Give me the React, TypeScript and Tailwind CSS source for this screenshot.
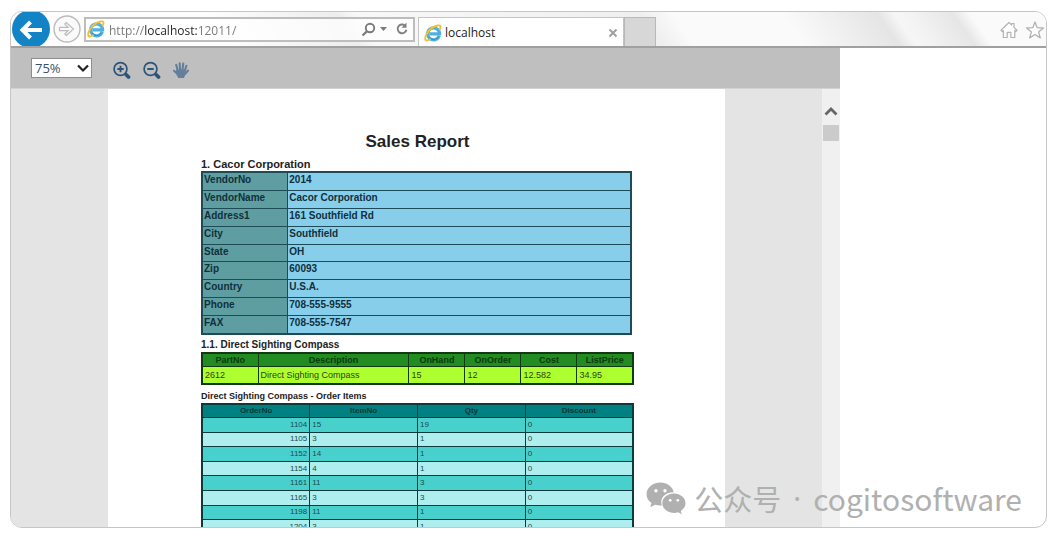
import React from "react";

const vendor = [
  ["VendorNo", "2014"],
  ["VendorName", "Cacor Corporation"],
  ["Address1", "161 Southfield Rd"],
  ["City", "Southfield"],
  ["State", "OH"],
  ["Zip", "60093"],
  ["Country", "U.S.A."],
  ["Phone", "708-555-9555"],
  ["FAX", "708-555-7547"],
];

const partColumns = ["PartNo", "Description", "OnHand", "OnOrder", "Cost", "ListPrice"];
const part = ["2612", "Direct Sighting Compass", "15", "12", "12.582", "34.95"];

const orderColumns = ["OrderNo", "ItemNo", "Qty", "Discount"];
const orders = [
  ["1104", "15", "19", "0"],
  ["1105", "3", "1", "0"],
  ["1152", "14", "1", "0"],
  ["1154", "4", "1", "0"],
  ["1161", "11", "3", "0"],
  ["1165", "3", "3", "0"],
  ["1198", "11", "1", "0"],
  ["1204", "3", "1", "0"],
];

function BrowserLogo() {
  return (
    <svg className="size-[18px] shrink-0" viewBox="0 0 18 18" fill="none" aria-hidden="true">
      <path d="M15.300 11.800A6 6 0 1 1 15.600 9.800H5.500" stroke="#4fb0e4" strokeWidth="3.200" />
      <path d="M14.300 13A5.600 5.600 0 0 1 5 13.200" stroke="#2f93d2" strokeWidth="1.200" />
      <path
        d="M15.800 5.400C17.300 2.400 16.400.800 13.600 1.500 9.800 2.400 5 5.800 2.600 10c-2 3.600-2 6.500.3 6.500 1 0 2-.500 3-1.200"
        stroke="#f3c033"
        strokeWidth="1.900"
        strokeLinecap="round"
      />
    </svg>
  );
}

function Magnifier({ plus }: { plus?: boolean }) {
  return (
    <svg className="size-[19px]" viewBox="0 0 19 19" fill="none" stroke="#2c5378" aria-hidden="true">
      <circle cx="8.500" cy="8" r="6.400" strokeWidth="1.700" />
      <path d={plus ? "M5.300 8h6.400M8.500 4.800v6.400" : "M5.300 8h6.400"} strokeWidth="1.900" />
      <path d="M14.500 14l2 2" strokeWidth="3.800" strokeLinecap="round" />
    </svg>
  );
}

function AddressBar() {
  return (
    <form className="ml-[3px] flex h-[25px] w-[331px] shrink-0 items-center border-2 border-[#bdbdbd] bg-white/70 pl-px pr-1">
      <BrowserLogo />
      <input
        type="text"
        aria-label="Address"
        defaultValue="http://localhost:12011/"
        className="ml-1 mt-1 min-w-0 flex-1 bg-[linear-gradient(90deg,#777_35px,#222_35px,#222_88px,#777_88px)] bg-clip-text text-xs text-transparent outline-none"
      />
      <button type="button" aria-label="Search" className="mr-1">
        <svg className="size-[15px]" viewBox="0 0 15 15" fill="none" stroke="#7a7a7a" strokeWidth="1.900" aria-hidden="true">
          <circle cx="9" cy="6" r="4.200" />
          <path d="M6 9.200L1.500 13.500" strokeWidth="2.200" />
        </svg>
      </button>
      <button type="button" aria-label="Show address list" className="mr-2">
        <svg className="h-1 w-[7px]" viewBox="0 0 7 4" fill="#7a7a7a" aria-hidden="true">
          <path d="M0 0h7L3.500 4z" />
        </svg>
      </button>
      <button type="button" aria-label="Refresh">
        <svg className="size-[14px]" viewBox="0 0 14 14" fill="none" stroke="#808080" strokeWidth="1.900" aria-hidden="true">
          <path d="M10 3.600A4.400 4.400 0 1 0 11.400 7.800" />
          <path d="M11.500.5v5.200H6.600z" fill="#808080" stroke="none" />
        </svg>
      </button>
    </form>
  );
}

function BrowserChrome() {
  return (
    <header className="flex h-9 shrink-0 items-center overflow-hidden border-b-2 border-[#a0a0a0] bg-[linear-gradient(55deg,#fdfdfd_0px,#fdfdfd_180px,#ededed_285px,#f8f8f8_300px,#efefef_535px,#fafafa_560px,#fafafa_650px,#e5e5e5_728px,#f6f6f6_742px,#f3f3f3_755px,#e6e6e6_790px,#fafafa_804px)]">
      <button type="button" aria-label="Back" className="ml-px shrink-0">
        <svg className="h-[34px] w-[38px]" viewBox="0 0 38 34" aria-hidden="true">
          <circle cx="19" cy="17" r="19" fill="#1283c4" />
          <path d="M30 18H11.500M18.500 10l-8 8 8 8" fill="none" stroke="#fff" strokeWidth="4" />
        </svg>
      </button>
      <button type="button" aria-label="Forward" className="ml-[3px] shrink-0">
        <svg className="size-7" viewBox="0 0 28 28" fill="none" stroke="#bcbcbc" aria-hidden="true">
          <circle cx="14" cy="14" r="13" strokeWidth="1.400" fill="#fafafa" />
          <path d="M6.500 12.300h8.500l-3.200-3.300 1.500-1.500L20.500 14l-7.200 6.500-1.500-1.500 3.200-3.300H6.500z" strokeWidth="1.200" />
        </svg>
      </button>
      <AddressBar />
      <div className="ml-[3px] flex h-[29px] w-[206px] shrink-0 items-center self-end border border-b-0 border-[#c4c4c4] bg-white pl-[5px] pr-[5px] pt-[2px]">
        <BrowserLogo />
        <span className="ml-[3px] flex-1 text-xs text-[#222]">localhost</span>
        <button type="button" aria-label="Close tab">
          <svg className="size-[10px]" viewBox="0 0 10 10" stroke="#a0a0a0" strokeWidth="2" aria-hidden="true">
            <path d="M1.500 1.500l7 7M8.500 1.500l-7 7" />
          </svg>
        </button>
      </div>
      <button type="button" aria-label="New tab" className="h-[29px] w-8 shrink-0 self-end border border-b-0 border-[#b8b8b8] bg-[#d7d7d7]" />
      <nav className="ml-auto flex items-center gap-2 pr-[2px] pt-[2px]">
        <button type="button" aria-label="Home">
          <svg className="size-[18px]" viewBox="0 0 18 18" fill="#fff" stroke="#b2b2b2" strokeWidth="1.200" strokeLinejoin="round" aria-hidden="true">
            <path d="M1 9.300L9 1.500l2.700 2.600V2.500H14v3.900l3 2.900-1.200 1.200-1-1V16.500h-3.900v-5.200H7.200v5.200H3.300v-7l-1.100 1z" />
          </svg>
        </button>
        <button type="button" aria-label="Favorites">
          <svg className="size-[18px]" viewBox="0 0 18 18" fill="#fff" stroke="#b2b2b2" strokeWidth="1.300" strokeLinejoin="round" aria-hidden="true">
            <path d="M9 1l2.200 5.700 6.200.3-4.800 3.900 1.700 6L9 13.500 3.700 16.900l1.700-6L.6 7l6.200-.3z" />
          </svg>
        </button>
      </nav>
    </header>
  );
}

function ViewerToolbar() {
  return (
    <div className="flex h-[41px] shrink-0 items-center border-b border-[#d2d2d2] bg-[#bfbfbf] pl-5">
      <div className="relative mr-5 flex">
        <select
          aria-label="Zoom level"
          defaultValue="75%"
          className="h-5 w-[61px] appearance-none border border-[#8c8c8c] bg-white pl-[3px] text-[13px] leading-none text-[#31536f]"
        >
          <option>75%</option>
          <option>100%</option>
        </select>
        <svg className="pointer-events-none absolute right-[3px] top-[6px] h-[9px] w-3" viewBox="0 0 12 9" fill="none" stroke="#222" strokeWidth="2.200" aria-hidden="true">
          <path d="M1 1.500l5 5 5-5" />
        </svg>
      </div>
      <div className="flex items-center gap-[11px] pt-1">
        <button type="button" aria-label="Zoom in">
          <Magnifier plus />
        </button>
        <button type="button" aria-label="Zoom out">
          <Magnifier />
        </button>
        <button type="button" aria-label="Pan">
          <svg className="size-[18px]" viewBox="0 0 18 18" fill="none" stroke="#637f99" strokeLinecap="round" aria-hidden="true">
            <path d="M5.600 9L4.200 3.800M8 8.500L7.700 2.200M10.500 8.500l.8-6M12.800 9.500l1.600-4.700M5 12.500L2 9.800M13 13l3-3.500" strokeWidth="2.100" />
            <path d="M4.500 8.500h9.300l-.3 4.500-1.500 4H6.300L3.500 11.500z" fill="#637f99" stroke="none" />
          </svg>
        </button>
      </div>
    </div>
  );
}

function Report() {
  return (
    <article className="mx-auto w-[617px] overflow-hidden bg-white pl-[93px] pr-[91px] pt-[41px] font-['Liberation_Sans',Arial,sans-serif] text-[#222]">
      <h1 className="mb-[3px] text-center text-[17px] font-bold leading-6">Sales Report</h1>

      <h2 className="text-[11px] font-bold leading-[14px]">1. Cacor Corporation</h2>
      <table className="h-[164px] w-[431px] table-fixed border-collapse border-2 border-[#1f4a58] text-[10px] font-bold leading-[14px] text-[#10303c]">
        <colgroup>
          <col className="w-1/5" />
          <col />
        </colgroup>
        <tbody>
          {vendor.map(([label, value]) => (
            <tr key={label}>
              <th scope="row" className="border border-[#1f4a58] bg-[#5f9ea0] p-0 pl-px text-left align-top">
                {label}
              </th>
              <td className="border border-[#1f4a58] bg-[#87ceeb] p-0 pl-px align-top">{value}</td>
            </tr>
          ))}
        </tbody>
      </table>

      <h3 className="mt-[3px] text-[10px] font-bold leading-[14px]">1.1. Direct Sighting Compass</h3>
      <table className="h-[33px] w-full table-fixed border-collapse border-2 border-[#123a12] text-[9px] leading-3">
        <colgroup>
          <col className="w-[13%]" />
          <col className="w-[35%]" />
          <col className="w-[13%]" />
          <col className="w-[13%]" />
          <col className="w-[13%]" />
          <col className="w-[13%]" />
        </colgroup>
        <thead>
          <tr>
            {partColumns.map((name) => (
              <th key={name} scope="col" className="border border-[#123a12] bg-[#228b22] p-0 font-bold text-[#0b3a0b]">
                {name}
              </th>
            ))}
          </tr>
        </thead>
        <tbody>
          <tr>
            {part.map((value) => (
              <td key={value} className="border border-[#123a12] bg-[#adff2f] p-0 pl-[2px] text-[#2c4410]">
                {value}
              </td>
            ))}
          </tr>
        </tbody>
      </table>

      <h4 className="mt-1 text-[9px] font-bold leading-[14px]">Direct Sighting Compass - Order Items</h4>
      <table className="h-[133px] w-full table-fixed border-collapse border-2 border-[#0e3a3c] text-[8px] leading-3">
        <thead>
          <tr>
            {orderColumns.map((name) => (
              <th key={name} scope="col" className="border border-[#0e3a3c] bg-[#008080] p-0 font-bold text-[#043838]">
                {name}
              </th>
            ))}
          </tr>
        </thead>
        <tbody>
          {orders.map((row) => (
            <tr key={row[0]} className="bg-[#afeeee] odd:bg-[#48d1cc]">
              {row.map((value, i) => (
                <td key={i} className="border border-[#0e3a3c] p-0 px-[2px] text-[#1d4a4a] first:text-right">
                  {value}
                </td>
              ))}
            </tr>
          ))}
        </tbody>
      </table>
    </article>
  );
}

function Watermark() {
  return (
    <div className="absolute bottom-[9px] right-6 flex items-center text-[#b0b0b0]">
      <svg className="mr-2 h-8 w-10" viewBox="0 0 40 32" aria-hidden="true">
        <path
          fill="#b0b0b0"
          d="M14.500.5C6.500.5.500 5.800.500 12.200c0 3.600 1.900 6.700 5 8.900L4.300 25.300l4.800-2.500c1.700.5 3.400.8 5.400.8l1.300-.1C13.500 16 19 10.300 27.800 10.300 26.500 4.600 21 .5 14.500.5z"
        />
        <path
          fill="#b0b0b0"
          d="M39.500 21.200c0-5.300-5.300-9.600-11.600-9.600s-11.600 4.300-11.600 9.600 5.300 9.700 11.600 9.700c1.400 0 2.800-.3 4.100-.7l3.800 2-1-3.300c2.900-1.900 4.700-4.600 4.700-7.700z"
        />
        <g fill="#fff">
          <circle cx="10" cy="8.800" r="1.700" />
          <circle cx="19" cy="8.800" r="1.700" />
          <circle cx="24.200" cy="18.300" r="1.400" />
          <circle cx="31.800" cy="18.300" r="1.400" />
        </g>
      </svg>
      <span className="font-['Noto_Sans_CJK_SC',sans-serif] text-[29px] leading-10">公众号</span>
      <span className="w-8 text-center font-['Noto_Sans',sans-serif] text-[29px] leading-10">·</span>
      <span className="font-['Noto_Sans_CJK_SC',sans-serif] text-[30px] leading-10">cogitosoftware</span>
    </div>
  );
}

export default function App() {
  return (
    <div className="h-screen bg-white pb-[13px] pl-[10px] pr-2 pt-[11px] font-['Open_Sans','Noto_Sans',sans-serif]">
      <div className="relative flex h-full flex-col overflow-hidden rounded-xl border border-[#c6c6c6] bg-white">
        <BrowserChrome />
        <main className="flex min-h-0 flex-1">
          <section className="flex w-[829px] flex-col">
            <ViewerToolbar />
            <div className="flex min-h-0 flex-1 bg-[#e4e4e4]">
              <div className="flex min-w-0 flex-1 overflow-hidden">
                <Report />
              </div>
              <div className="flex w-[18px] flex-col items-center bg-[#f0f0f0] pt-4">
                <button type="button" aria-label="Scroll up" className="flex">
                  <svg className="h-[11px] w-[14px]" viewBox="0 0 14 11" fill="none" stroke="#666" strokeWidth="2.800" aria-hidden="true">
                    <path d="M1.500 9.500L7 4l5.500 5.500" />
                  </svg>
                </button>
                <div className="mt-[9px] size-4 bg-[#cbcbcb]" />
              </div>
            </div>
          </section>
        </main>
        <Watermark />
      </div>
    </div>
  );
}
